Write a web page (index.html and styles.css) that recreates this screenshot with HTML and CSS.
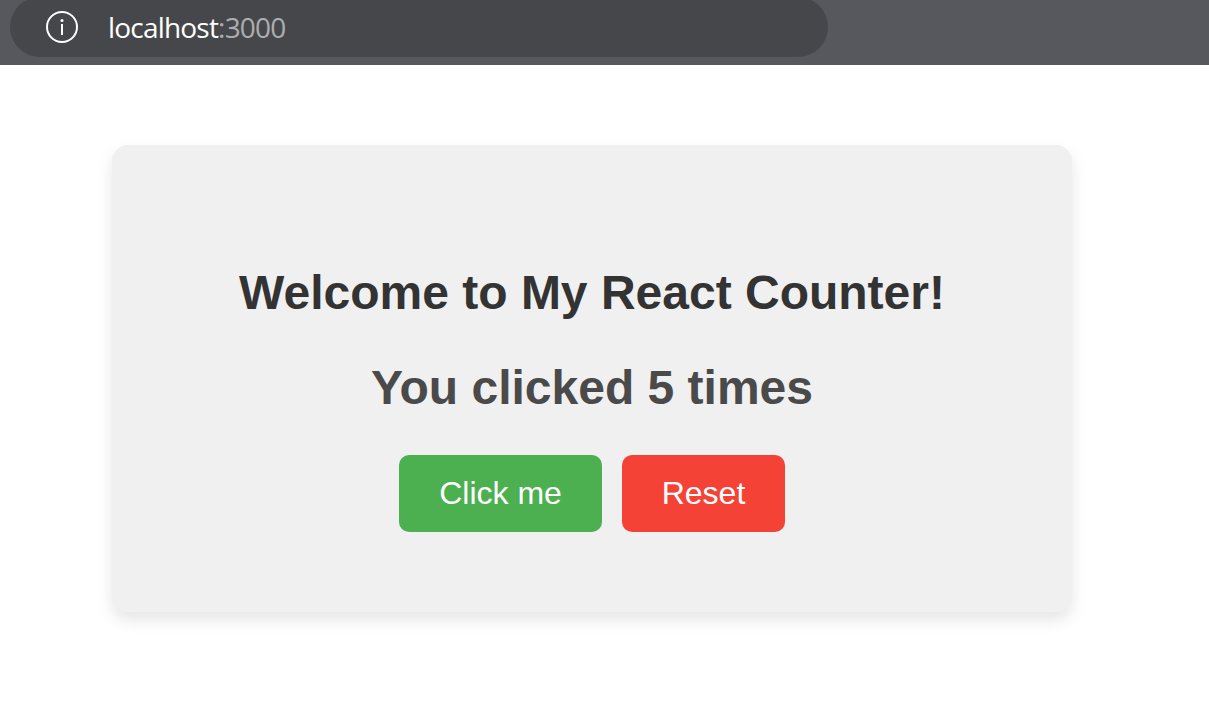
FILE: index.html
```html
<!DOCTYPE html>
<html lang="en">
<head>
<meta charset="utf-8">
<title>React Counter</title>
<link rel="stylesheet" href="styles.css">
</head>
<body>
<header class="toolbar">
  <div class="address">
    <svg class="info" viewBox="0 0 34 34" aria-hidden="true">
      <circle cx="17" cy="17" r="15" fill="none" stroke="#fff" stroke-width="2"/>
      <path d="M17 14V25" stroke="#fff" stroke-width="2"/>
      <circle cx="17" cy="10.5" r="1.5" fill="#fff"/>
    </svg>
    <span class="url">localhost<span class="port">:3000</span></span>
  </div>
</header>
<main class="page">
  <section class="card">
    <h1 class="title">Welcome to My React Counter!</h1>
    <h2 class="count">You clicked 5 times</h2>
    <div class="actions">
      <button class="btn click">Click me</button>
      <button class="btn reset">Reset</button>
    </div>
  </section>
</main>
</body>
</html>
```
FILE: styles.css
```css
* { box-sizing: border-box; }
body { margin: 0; height: 716px; overflow: hidden; background: #fff; font-family: "Liberation Sans", Arial, sans-serif; }
.toolbar { height: 65px; display: flex; align-items: flex-end; padding: 0 0 8px 10px; overflow: hidden; background: #57585d; }
.address { width: 818px; height: 60px; flex: none; padding: 0 35px; display: flex; align-items: center; gap: 29px; background: #46474a; border-radius: 30px; }
.info { width: 34px; height: 34px; flex: none; }
.url { font: 28px/40px "Open Sans", sans-serif; color: #fff; margin-top: -1px; letter-spacing: -0.8px; }
.port { color: #adadb0; }
.page { padding: 80px 0 0 112px; }
.card { width: 960px; height: 467px; padding-top: 120px; background: #f0f0f0; border-radius: 16px; box-shadow: 0 8px 16px rgba(0,0,0,.1); text-align: center; }
.title, .count { margin: 0; font-size: 48px; line-height: 56px; font-weight: 700; }
.title { color: #333; }
.count { margin-top: 39px; color: #4a4a4a; }
.actions { display: flex; justify-content: center; gap: 20px; margin-top: 39px; }
.btn { height: 77px; padding: 0; border: 0; border-radius: 10px; color: #fff; font: 32px/37px "Liberation Sans", Arial, sans-serif; }
.click { width: 203px; background: #4caf50; }
.reset { width: 163px; background: #f44336; }
```
